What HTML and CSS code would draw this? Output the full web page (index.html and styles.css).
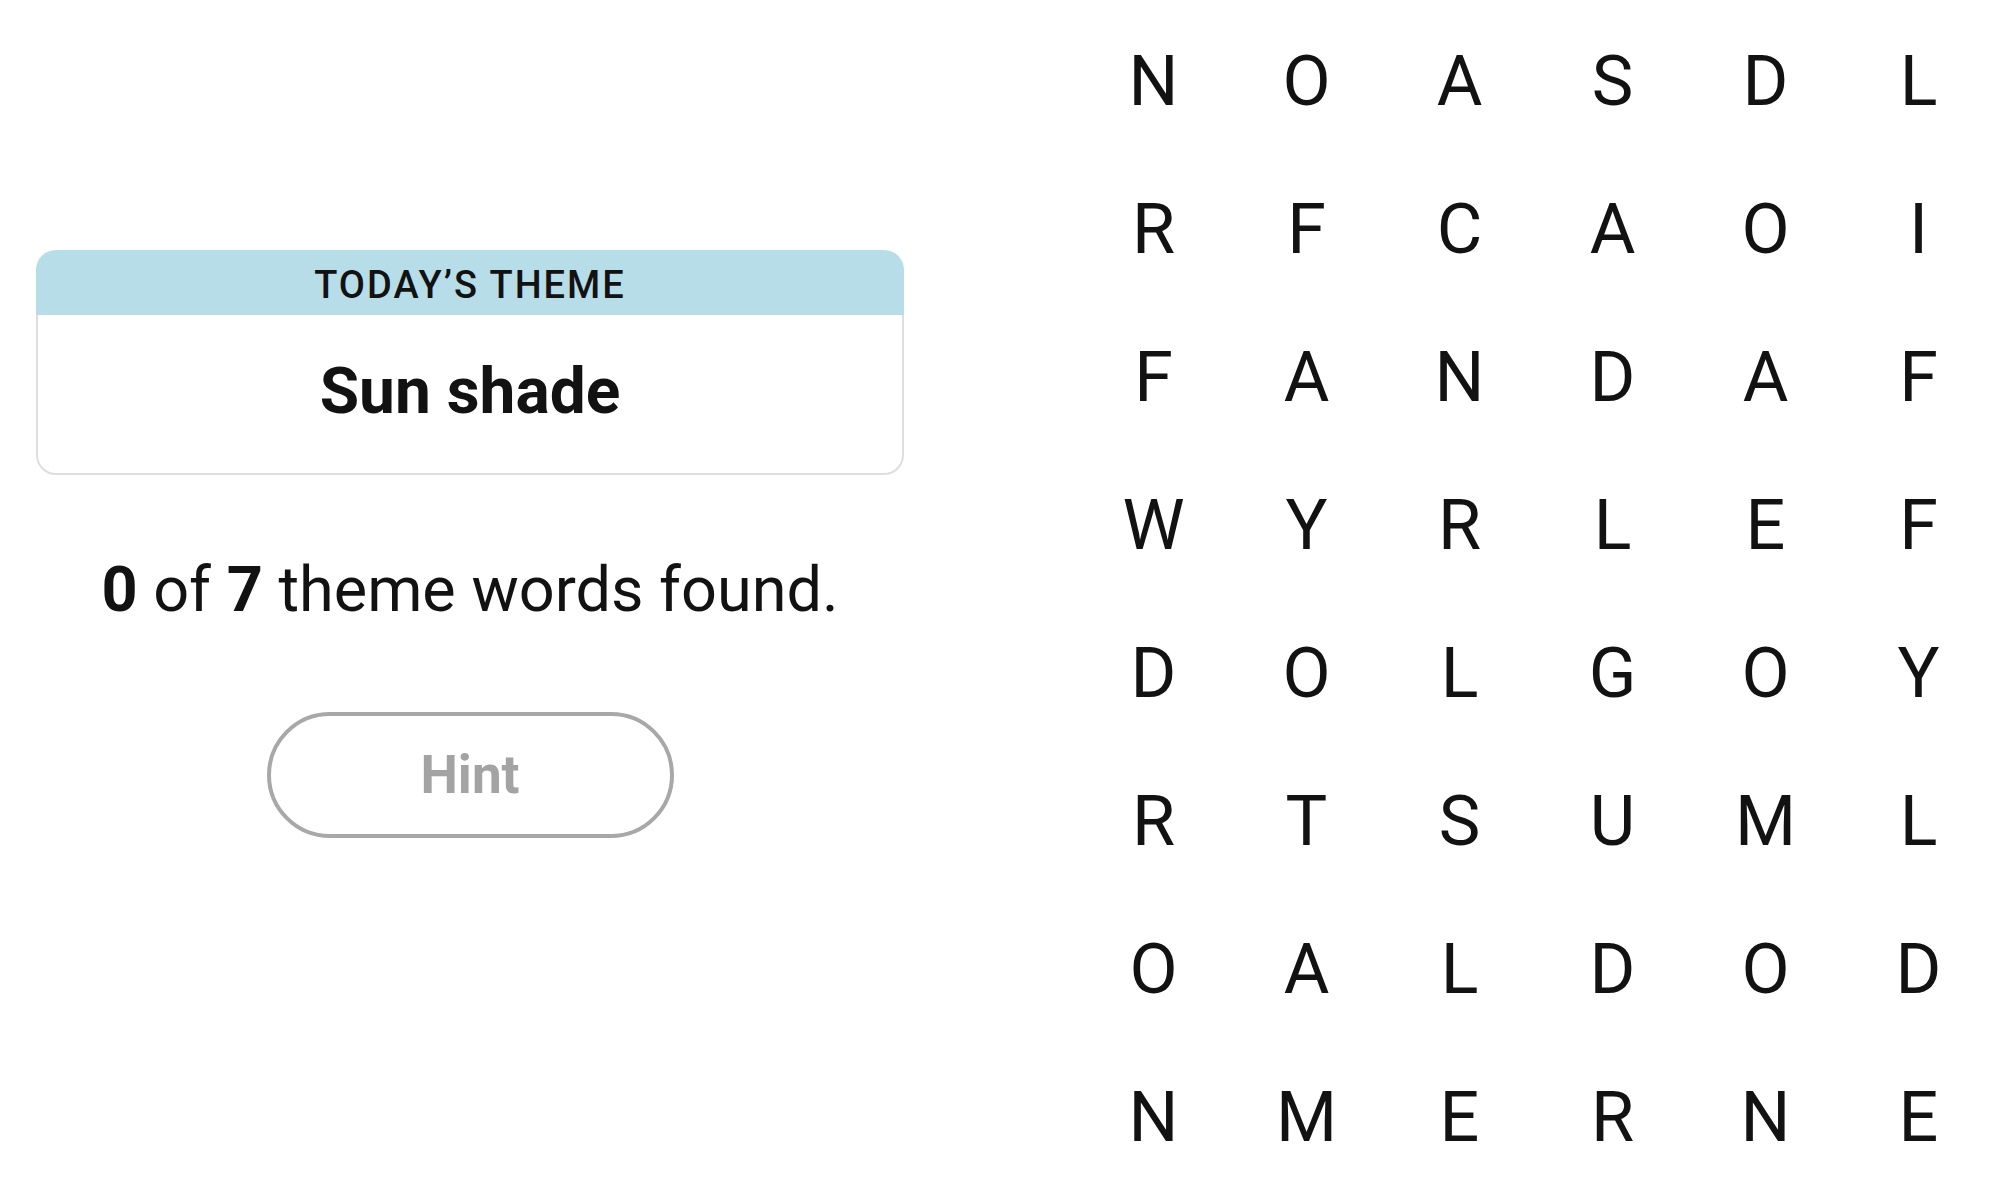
FILE: index.html
```html
<!DOCTYPE html>
<html lang="en">
<head>
<meta charset="utf-8">
<title>Strands</title>
<link rel="stylesheet" href="styles.css">
</head>
<body>
<main class="page">
  <section class="info">
    <div class="theme-card">
      <div class="theme-head">TODAY’S THEME</div>
      <div class="theme-body">Sun shade</div>
    </div>
    <p class="status"><b>0</b> of <b>7</b> theme words found.</p>
    <button class="hint" type="button">Hint</button>
  </section>
  <section class="board">
    <span class="cell">N</span><span class="cell">O</span><span class="cell">A</span><span class="cell">S</span><span class="cell">D</span><span class="cell">L</span>
    <span class="cell">R</span><span class="cell">F</span><span class="cell">C</span><span class="cell">A</span><span class="cell">O</span><span class="cell">I</span>
    <span class="cell">F</span><span class="cell">A</span><span class="cell">N</span><span class="cell">D</span><span class="cell">A</span><span class="cell">F</span>
    <span class="cell">W</span><span class="cell">Y</span><span class="cell">R</span><span class="cell">L</span><span class="cell">E</span><span class="cell">F</span>
    <span class="cell">D</span><span class="cell">O</span><span class="cell">L</span><span class="cell">G</span><span class="cell">O</span><span class="cell">Y</span>
    <span class="cell">R</span><span class="cell">T</span><span class="cell">S</span><span class="cell">U</span><span class="cell">M</span><span class="cell">L</span>
    <span class="cell">O</span><span class="cell">A</span><span class="cell">L</span><span class="cell">D</span><span class="cell">O</span><span class="cell">D</span>
    <span class="cell">N</span><span class="cell">M</span><span class="cell">E</span><span class="cell">R</span><span class="cell">N</span><span class="cell">E</span>
  </section>
</main>
</body>
</html>
```
FILE: styles.css
```css
html, body {
  margin: 0;
  padding: 0;
  background: #ffffff;
}
body {
  font-family: Roboto, "Liberation Sans", Arial, sans-serif;
  color: #121212;
}
.page {
  display: flex;
  align-items: flex-start;
}
.info {
  width: 940px;
  box-sizing: border-box;
  padding: 250px 36px 0 36px;
  display: flex;
  flex-direction: column;
  align-items: center;
}
.theme-card {
  width: 100%;
}
.theme-head {
  background: #b7dde9;
  border-radius: 20px 20px 0 0;
  padding-top: 5px;
  line-height: 60px;
  text-align: center;
  font-size: 38px;
  font-weight: 500;
  letter-spacing: 2px;
  color: #121212;
}
.theme-body {
  border: 2px solid #dedede;
  border-top: none;
  border-radius: 0 0 20px 20px;
  padding: 45px 0 49px;
  text-align: center;
  font-size: 64px;
  line-height: 1;
  font-weight: 700;
}
.status {
  margin: 83px 0 0;
  font-size: 63px;
  line-height: 1;
  font-weight: 400;
  text-align: center;
}
.status b {
  font-weight: 700;
}
.hint {
  margin-top: 91px;
  width: 407px;
  height: 126px;
  border: 4px solid #a8a8a8;
  border-radius: 63px;
  background: #ffffff;
  color: #a3a3a3;
  font-family: Roboto, "Liberation Sans", Arial, sans-serif;
  font-size: 53px;
  font-weight: 700;
  line-height: 1;
  padding: 0;
  display: flex;
  align-items: center;
  justify-content: center;
}
.board {
  margin-left: 137px;
  padding-top: 7px;
  display: grid;
  grid-template-columns: repeat(6, 153px);
  grid-template-rows: repeat(8, 148px);
}
.cell {
  display: flex;
  align-items: center;
  justify-content: center;
  font-size: 70px;
  line-height: 148px;
  color: #121212;
}
```
